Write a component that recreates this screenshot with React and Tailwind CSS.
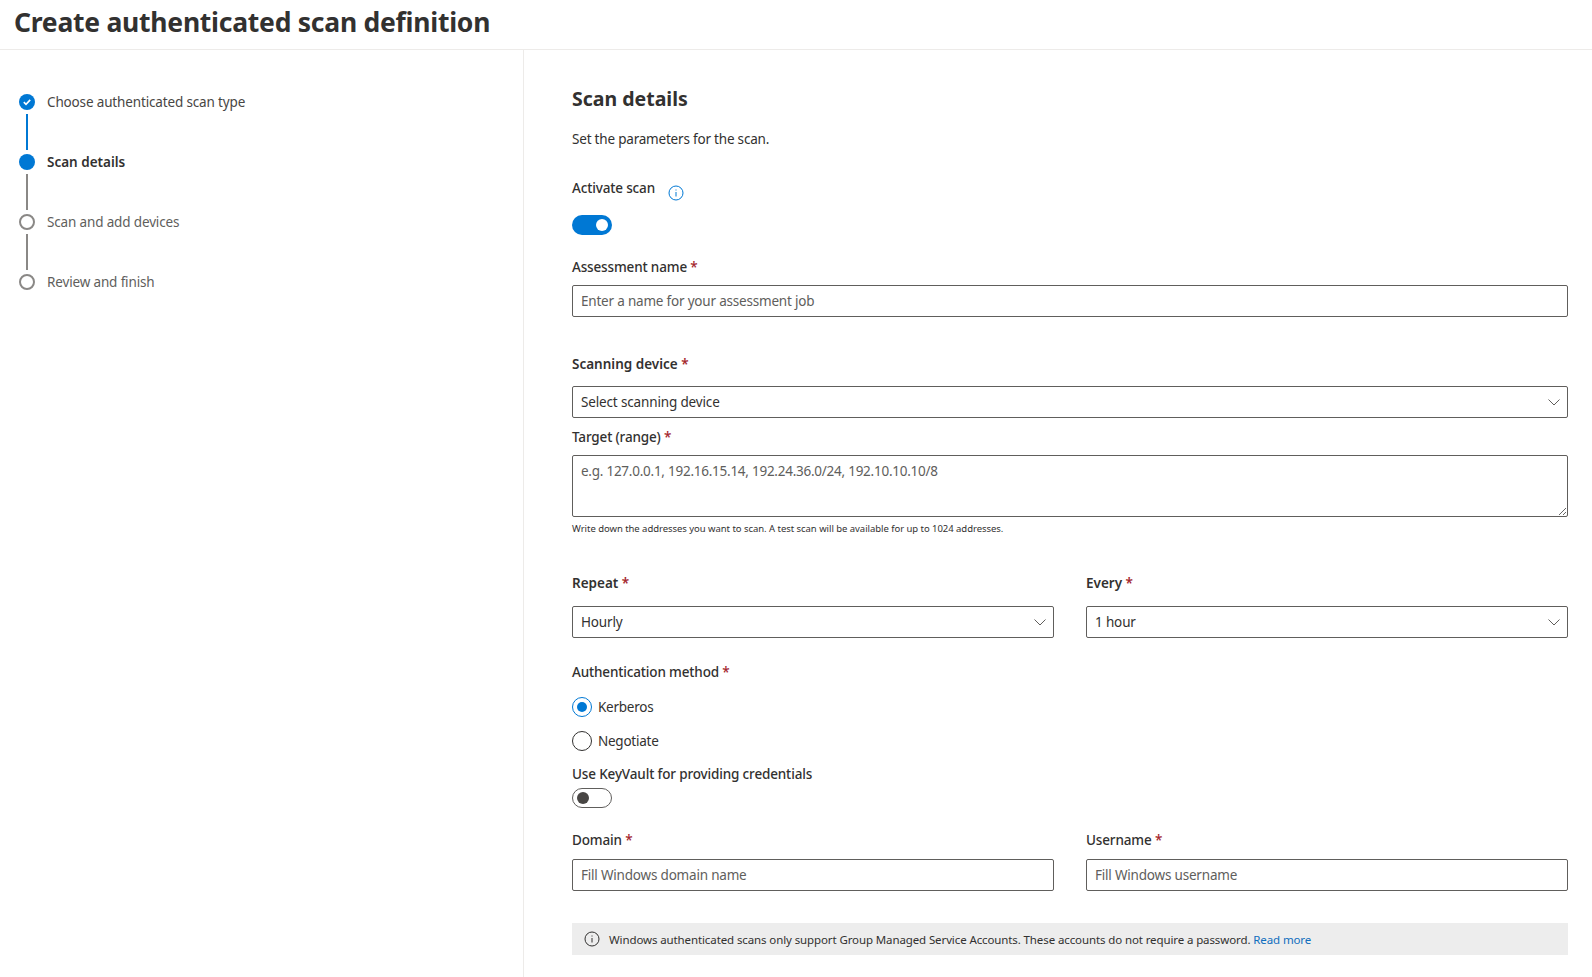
import { useState } from 'react';

const steps = [
  { label: 'Choose authenticated scan type', state: 'done' },
  { label: 'Scan details', state: 'current' },
  { label: 'Scan and add devices', state: 'todo' },
  { label: 'Review and finish', state: 'todo' },
];

function StepDot({ state }) {
  if (state === 'done') {
    return (
      <span className="flex h-4 w-4 items-center justify-center rounded-full bg-[#0078d4]">
        <svg width="10" height="10" viewBox="0 0 10 10" fill="none" stroke="#fff" strokeWidth="1.6">
          <path d="M1.8 5.2 4 7.3 8.2 2.9" />
        </svg>
      </span>
    );
  }
  if (state === 'current') return <span className="h-4 w-4 rounded-full bg-[#0078d4]" />;
  return <span className="h-4 w-4 rounded-full border-2 border-[#8a8886] bg-white" />;
}

function Stepper() {
  return (
    <nav className="w-[524px] shrink-0 border-r border-[#edebe9] pl-[19px] pt-[44px]">
      {steps.map((step, i) => (
        <div key={step.label}>
          <div className="flex h-4 items-center gap-[12px]">
            <StepDot state={step.state} />
            <span
              className={
                step.state === 'current'
                  ? 'text-[13.5px] leading-4 font-semibold text-[#323130]'
                  : step.state === 'done'
                    ? 'text-[13.5px] leading-4 tracking-[-0.15px] text-[#484644]'
                    : 'text-[13.5px] leading-4 tracking-[-0.15px] text-[#605e5c]'
              }
            >
              {step.label}
            </span>
          </div>
          {i < steps.length - 1 && (
            <div
              className={`my-1 ml-[7px] h-9 w-[2px] ${step.state === 'done' ? 'bg-[#0078d4]' : 'bg-[#8a8886]'}`}
            />
          )}
        </div>
      ))}
    </nav>
  );
}

function Label({ children, required, bold, className = '' }) {
  return (
    <div
      className={`text-[13.5px] leading-5 text-[#323130] ${
        bold ? 'font-semibold' : 'font-medium tracking-[-0.15px]'
      } ${className}`}
    >
      {children}
      {required && <span className="text-[#a4262c]"> *</span>}
    </div>
  );
}

function TextInput({ placeholder, className = '' }) {
  return (
    <input
      type="text"
      placeholder={placeholder}
      className={`block h-8 w-full rounded-[2px] border border-[#605e5c] bg-white px-2 text-[13.5px] tracking-[-0.2px] text-[#323130] outline-none placeholder:text-[#605e5c] ${className}`}
    />
  );
}

function Dropdown({ value, className = '' }) {
  return (
    <button
      type="button"
      className={`flex h-8 w-full items-center justify-between rounded-[2px] border border-[#605e5c] bg-white pl-2 pr-[6px] text-[13.5px] tracking-[-0.15px] text-[#323130] ${className}`}
    >
      <span>{value}</span>
      <svg width="14" height="14" viewBox="0 0 14 14" fill="none" stroke="#605e5c" strokeWidth="1">
        <path d="M1.5 4.5 7 10l5.5-5.5" />
      </svg>
    </button>
  );
}

function Toggle({ on, onChange, className = '' }) {
  return (
    <button
      type="button"
      onClick={() => onChange(!on)}
      className={`flex h-5 w-10 items-center rounded-full px-1 ${
        on ? 'justify-end bg-[#0078d4]' : 'justify-start border border-[#605e5c] bg-white'
      } ${className}`}
    >
      <span className={`h-3 w-3 rounded-full ${on ? 'bg-white' : 'bg-[#484644]'}`} />
    </button>
  );
}

function Radio({ label, checked, onSelect, className = '' }) {
  return (
    <label
      className={`flex h-5 items-center gap-[6px] text-[13.5px] tracking-[-0.25px] text-[#323130] ${className}`}
      onClick={onSelect}
    >
      <span
        className={`flex h-5 w-5 items-center justify-center rounded-full border ${
          checked ? 'border-[#0078d4]' : 'border-[#323130]'
        }`}
      >
        {checked && <span className="h-[10px] w-[10px] rounded-full bg-[#0078d4]" />}
      </span>
      {label}
    </label>
  );
}

function InfoIcon({ color, className = '' }) {
  return (
    <svg className={className} width="16" height="16" viewBox="0 0 16 16" fill="none" stroke={color}>
      <circle cx="8" cy="8" r="7" />
      <path d="M8 7v4.5" />
      <path d="M8 4.5v1" />
    </svg>
  );
}

export default function App() {
  const [active, setActive] = useState(true);
  const [keyVault, setKeyVault] = useState(false);
  const [method, setMethod] = useState('kerberos');

  return (
    <div className="flex h-[977px] flex-col overflow-hidden bg-white font-['Noto_Sans',sans-serif]">
      <header className="h-[50px] shrink-0 border-b border-[#edebe9] pl-[14px]">
        <h1 className="text-[26.5px] leading-[44px] font-bold tracking-[-0.25px] text-[#323130]">Create authenticated scan definition</h1>
      </header>

      <div className="flex min-h-0 flex-1">
        <Stepper />

        <main className="min-w-0 flex-1 pl-[48px] pr-6 pt-[35px]">
          <h2 className="text-[19.5px] leading-7 font-bold text-[#323130]">Scan details</h2>
          <p className="mt-4 text-[13.5px] leading-5 tracking-[-0.2px] text-[#323130]">Set the parameters for the scan.</p>

          <div className="mt-[29px] flex h-5 items-start gap-[13px]">
            <Label>Activate scan</Label>
            <InfoIcon color="#0078d4" className="mt-[7px]" />
          </div>
          <Toggle on={active} onChange={setActive} className="mt-[17px]" />

          <Label required className="mt-[22px]">Assessment name</Label>
          <TextInput placeholder="Enter a name for your assessment job" className="mt-2" />

          <Label required bold className="mt-[37px]">Scanning device</Label>
          <Dropdown value="Select scanning device" className="mt-3" />

          <Label required className="mt-[9px]">Target (range)</Label>
          <textarea
            placeholder="e.g. 127.0.0.1, 192.16.15.14, 192.24.36.0/24, 192.10.10.10/8"
            className="mt-2 block h-[62px] w-full rounded-[2px] border border-[#605e5c] px-2 py-[5px] text-[13.5px] leading-5 tracking-[-0.25px] text-[#323130] outline-none placeholder:text-[#605e5c]"
          />
          <p className="mt-[5px] text-[9.5px] leading-[14px] tracking-[-0.04px] text-[#323130]">
            Write down the addresses you want to scan. A test scan will be available for up to 1024 addresses.
          </p>

          <div className="mt-[37px] grid grid-cols-2 gap-x-8">
            <div>
              <Label required bold>Repeat</Label>
              <Dropdown value="Hourly" className="mt-[13px]" />
            </div>
            <div>
              <Label required bold>Every</Label>
              <Dropdown value="1 hour" className="mt-[13px]" />
            </div>
          </div>

          <Label required className="mt-6">Authentication method</Label>
          <Radio label="Kerberos" checked={method === 'kerberos'} onSelect={() => setMethod('kerberos')} className="mt-[15px]" />
          <Radio label="Negotiate" checked={method === 'negotiate'} onSelect={() => setMethod('negotiate')} className="mt-[14px]" />

          <Label className="mt-[13px]">Use KeyVault for providing credentials</Label>
          <Toggle on={keyVault} onChange={setKeyVault} className="mt-1" />

          <div className="mt-[22px] grid grid-cols-2 gap-x-8">
            <div>
              <Label required>Domain</Label>
              <TextInput placeholder="Fill Windows domain name" className="mt-[9px]" />
            </div>
            <div>
              <Label required>Username</Label>
              <TextInput placeholder="Fill Windows username" className="mt-[9px]" />
            </div>
          </div>

          <div className="mt-8 flex h-8 items-center gap-[9px] bg-[#ededed] pl-3 text-[11.5px] tracking-[-0.11px] text-[#323130]">
            <InfoIcon color="#323130" className="shrink-0" />
            <p className="pt-px">
              Windows authenticated scans only support Group Managed Service Accounts. These accounts do not require a password.{' '}
              <a href="#" className="text-[#106ebe]">Read more</a>
            </p>
          </div>
        </main>
      </div>
    </div>
  );
}
